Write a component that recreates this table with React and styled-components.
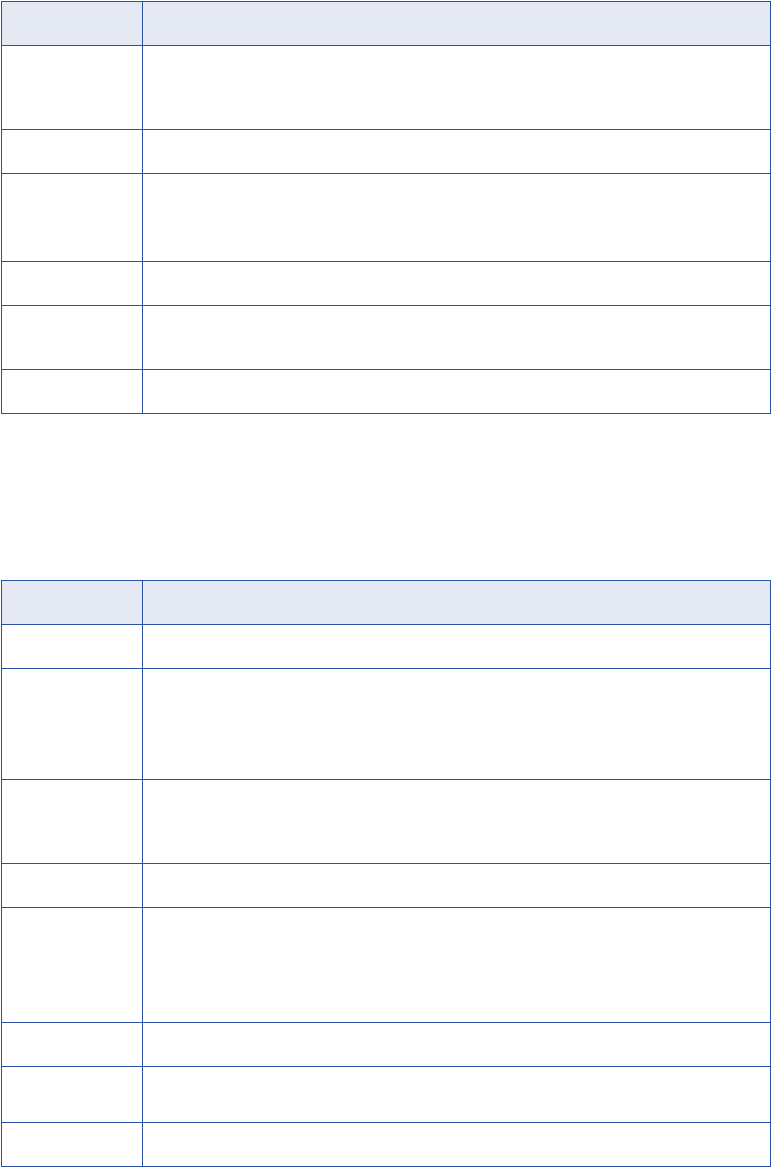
import React from "react";
import styled, { createGlobalStyle } from "styled-components";

const GlobalStyle = createGlobalStyle`
  html, body {
    margin: 0;
    padding: 0;
    background: #ffffff;
    font-family: "Liberation Sans", Arial, sans-serif;
  }
`;

const Page = styled.div`
  display: flex;
  flex-direction: column;
  gap: 166px;
  padding: 1px 0 0 1px;
  width: 770px;
`;

const Table = styled.table`
  border-collapse: collapse;
  table-layout: fixed;
  width: 770px;
`;

const HeadCell = styled.th`
  background-color: #e4e9f4;
  border: 1px solid #2a51a6;
  height: 44px;
  padding: 0;
  box-sizing: border-box;
  width: ${(p) => p.width || "auto"};
`;

const Cell = styled.td`
  border: 1px solid #2a51a6;
  height: ${(p) => p.h}px;
  padding: 0;
  box-sizing: border-box;
`;

const tableOne = [84, 44, 88, 44, 64, 44];
const tableTwo = [44, 111, 84, 44, 115, 44, 56, 44];

function EmptyTable({ rows }) {
  return (
    <Table>
      <thead>
        <tr>
          <HeadCell width="141px"></HeadCell>
          <HeadCell></HeadCell>
        </tr>
      </thead>
      <tbody>
        {rows.map((h, i) => (
          <tr key={i}>
            <Cell h={h}></Cell>
            <Cell h={h}></Cell>
          </tr>
        ))}
      </tbody>
    </Table>
  );
}

export default function App() {
  return (
    <>
      <GlobalStyle />
      <Page>
        <EmptyTable rows={tableOne} />
        <EmptyTable rows={tableTwo} />
      </Page>
    </>
  );
}
